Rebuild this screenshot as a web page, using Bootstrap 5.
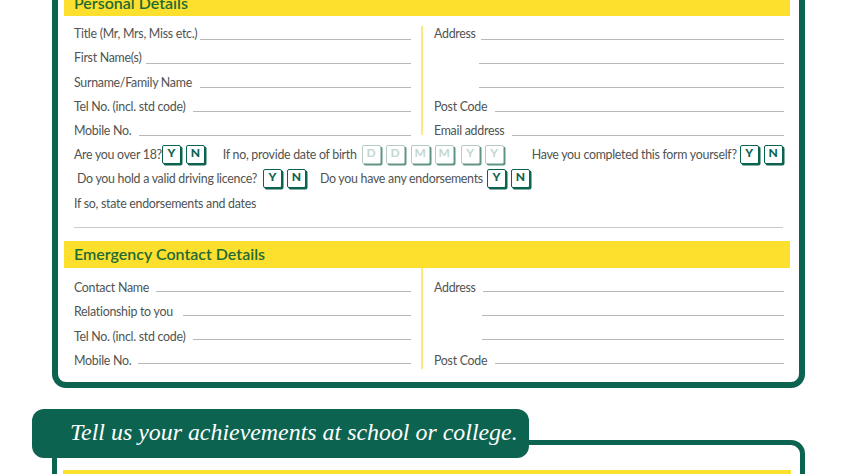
<!DOCTYPE html>
<html lang="en">
<head>
<meta charset="utf-8">
<title>Application form</title>
<link href="https://cdn.jsdelivr.net/npm/bootstrap@5.3.0/dist/css/bootstrap.min.css" rel="stylesheet">
<style>
html,body{height:474px;overflow:hidden;background:#fff}
body{font-family:Lato,"Liberation Sans",sans-serif;font-size:12.4px;letter-spacing:-.28px;color:#505452;line-height:1}
.sheet{margin:-24px 45px 0 52px;height:412px;border:6px solid #0c6350;border-top:0;border-radius:0 0 14px 14px;padding:0 9px 0 6px}
.band{background:#fde02e;color:#1f6b35;font-weight:600;font-size:16px;letter-spacing:0;padding:0 0 0 10px;display:flex;align-items:center}
.band-a{height:40px;padding-top:13px}
.band-b{height:27.5px;margin-top:12.5px}
.cols{padding-left:10px}
.col-l{width:337px;position:relative}
.col-r{width:350px;margin-left:23px}
.col-l::after{content:"";position:absolute;right:-12px;top:10px;bottom:2px;width:2px;background:#fbe87e}
.col-l.low::after{top:0;bottom:-4px}
.fld{height:24.2px;display:flex;align-items:flex-end}
.fld span{white-space:nowrap;margin-bottom:-.4px}
.fld i,.fld b{flex:1;border-bottom:1px solid #b7b9b8;margin-bottom:.5px}
.cols-b .fld span{margin-bottom:-2.4px}
.g3{margin-left:3px}.g5{margin-left:5px}.g7{margin-left:7px}.g8{margin-left:8px}.g10{margin-left:10px}
.blank-a{margin-left:45px}
.blank-b{margin-left:47.5px}
.yn{display:flex;align-items:center;height:24.4px;padding-left:10px;white-space:nowrap}
.yn-a{margin-top:5px}
.tk{width:19px;height:19px;margin-right:5px;border:1px solid #0c6350;border-radius:2px;box-shadow:1.5px 1.5px 0 #0c6350;color:#0c6350;font-weight:900;font-size:12px;letter-spacing:0;display:flex;align-items:center;justify-content:center;background:#fff;flex:none;padding-bottom:3px}
.tk.fd{border-color:#b5cbc4;box-shadow:1.5px 1.5px 0 #5f9485;color:#c3d7d1;font-weight:700}
.tk.fd.gp1{margin-right:6px}
.tk.fd.gp2{margin-right:7px}
.tx{padding-top:2px}
.t-b{margin-left:13px;margin-right:5px}
.t-c{margin-left:23px;margin-right:3px}
.t-e{margin-left:3px;margin-right:6px}
.t-f{margin-left:9px;margin-right:4px}
.rule{border-bottom:1px solid #c9cbca;margin:6px 7px 0 10px;height:7px}
.ban{position:relative;z-index:2;width:497px;height:49px;margin:21px 0 0 32px;background:#0c6350;border-radius:12px;color:#fff;font-family:"Liberation Serif",serif;font-style:italic;font-size:23.9px;letter-spacing:0;line-height:47px;padding-left:38px;white-space:nowrap}
.sheet2{margin:-18px 45px 0 52px;height:34px;border:5px solid #0c6350;border-bottom:0;border-radius:14px 14px 0 0;padding:25px 9px 0 6px;overflow:hidden}
.band-c{height:30px}
</style>
</head>
<body>
<div class="sheet">
  <div class="band band-a">Personal Details</div>
  <div class="cols d-flex">
    <div class="col-l">
      <div class="fld"><span>Title (Mr, Mrs, Miss etc.)</span><i class="g3"></i></div>
      <div class="fld"><span>First Name(s)</span><i class="g5"></i></div>
      <div class="fld"><span>Surname/Family Name</span><i class="g8"></i></div>
      <div class="fld"><span>Tel No. (incl. std code)</span><i class="g7"></i></div>
      <div class="fld"><span>Mobile No.</span><i class="g8"></i></div>
    </div>
    <div class="col-r">
      <div class="fld"><span>Address</span><i class="g5"></i></div>
      <div class="fld"><b class="blank-a"></b></div>
      <div class="fld"><b class="blank-a"></b></div>
      <div class="fld"><span>Post Code</span><i class="g8"></i></div>
      <div class="fld"><span>Email address</span><i class="g8"></i></div>
    </div>
  </div>
  <div class="yn yn-a">
    <span class="tx">Are you over 18?</span><div class="tk">Y</div><div class="tk">N</div>
    <span class="t-b tx">If no, provide date of birth</span>
    <div class="tk fd">D</div><div class="tk fd gp1">D</div><div class="tk fd">M</div><div class="tk fd gp2">M</div><div class="tk fd">Y</div><div class="tk fd">Y</div>
    <span class="t-c tx">Have you completed this form yourself?</span><div class="tk">Y</div><div class="tk">N</div>
  </div>
  <div class="yn">
    <span class="t-e tx">Do you hold a valid driving licence?</span><div class="tk">Y</div><div class="tk">N</div>
    <span class="t-f tx">Do you have any endorsements</span><div class="tk">Y</div><div class="tk">N</div>
  </div>
  <div class="yn"><span class="tx">If so, state endorsements and dates</span></div>
  <div class="rule"></div>
  <div class="band band-b">Emergency Contact Details</div>
  <div class="cols cols-b d-flex">
    <div class="col-l low">
      <div class="fld"><span>Contact Name</span><i class="g7"></i></div>
      <div class="fld"><span>Relationship to you</span><i class="g10"></i></div>
      <div class="fld"><span>Tel No. (incl. std code)</span><i class="g7"></i></div>
      <div class="fld"><span>Mobile No.</span><i class="g7"></i></div>
    </div>
    <div class="col-r">
      <div class="fld"><span>Address</span><i class="g7"></i></div>
      <div class="fld"><b class="blank-b"></b></div>
      <div class="fld"><b class="blank-b"></b></div>
      <div class="fld"><span>Post Code</span><i class="g8"></i></div>
    </div>
  </div>
</div>
<div class="ban">Tell us your achievements at school or college.</div>
<div class="sheet2"><div class="band band-c"></div></div>
</body>
</html>
